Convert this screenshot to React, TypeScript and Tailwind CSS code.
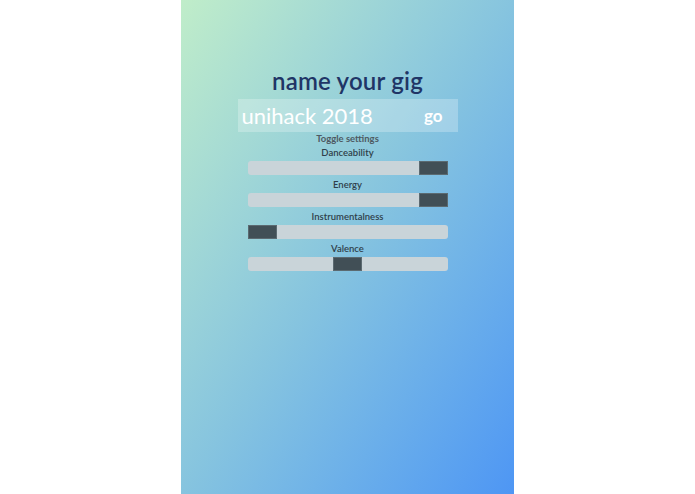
import { useState } from 'react'

type Setting = { label: string; value: number }

const SETTINGS: Setting[] = [
  { label: 'Danceability', value: 100 },
  { label: 'Energy', value: 100 },
  { label: 'Instrumentalness', value: 0 },
  { label: 'Valence', value: 50 },
]

function Slider({ label, value }: Setting) {
  // thumb is 29px on a 200px track
  const left = (value / 100) * (200 - 29)
  return (
    <div className="flex flex-col items-center">
      <span className="text-[9.5px] leading-[12px] text-[#2f3f4a] font-semibold">{label}</span>
      <div className="relative mt-[2px] w-[200px] h-[14px] rounded-[3px] bg-[#c9d4d9]">
        <div
          className="absolute top-0 h-[14px] w-[29px] bg-[#414f56] border border-[#5b6a71]"
          style={{ left }}
        />
      </div>
    </div>
  )
}

export default function App() {
  const [name, setName] = useState('unihack 2018')

  return (
    <div className="w-full min-h-[494px] bg-white flex justify-center" style={{ fontFamily: 'Lato, "Noto Sans", sans-serif' }}>
      <div className="w-[333px] h-[494px] bg-gradient-to-br from-[#c0edc9] via-[#86c4df] to-[#4e96f4] flex flex-col items-center">
        <h1 className="mt-[66px] text-[24px] leading-[30px] font-semibold text-[#1f3566] tracking-[0.2px]">
          name your gig
        </h1>
        <div className="mt-[3px] w-[220px] h-[33px] bg-white/25 flex items-center pl-[4px] pr-[15px]">
          <input
            value={name}
            onChange={e => setName(e.target.value)}
            className="flex-1 min-w-0 bg-transparent text-white text-[22px] leading-[26px] outline-none"
          />
          <button className="text-white text-[17px] font-bold leading-none">go</button>
        </div>
        <p className="mt-[1px] text-[9.5px] leading-[12px] font-bold text-[#4e5a63]">Toggle settings</p>
        <div className="mt-[2px] flex flex-col gap-[4px]">
          {SETTINGS.map(s => (
            <Slider key={s.label} {...s} />
          ))}
        </div>
      </div>
    </div>
  )
}
